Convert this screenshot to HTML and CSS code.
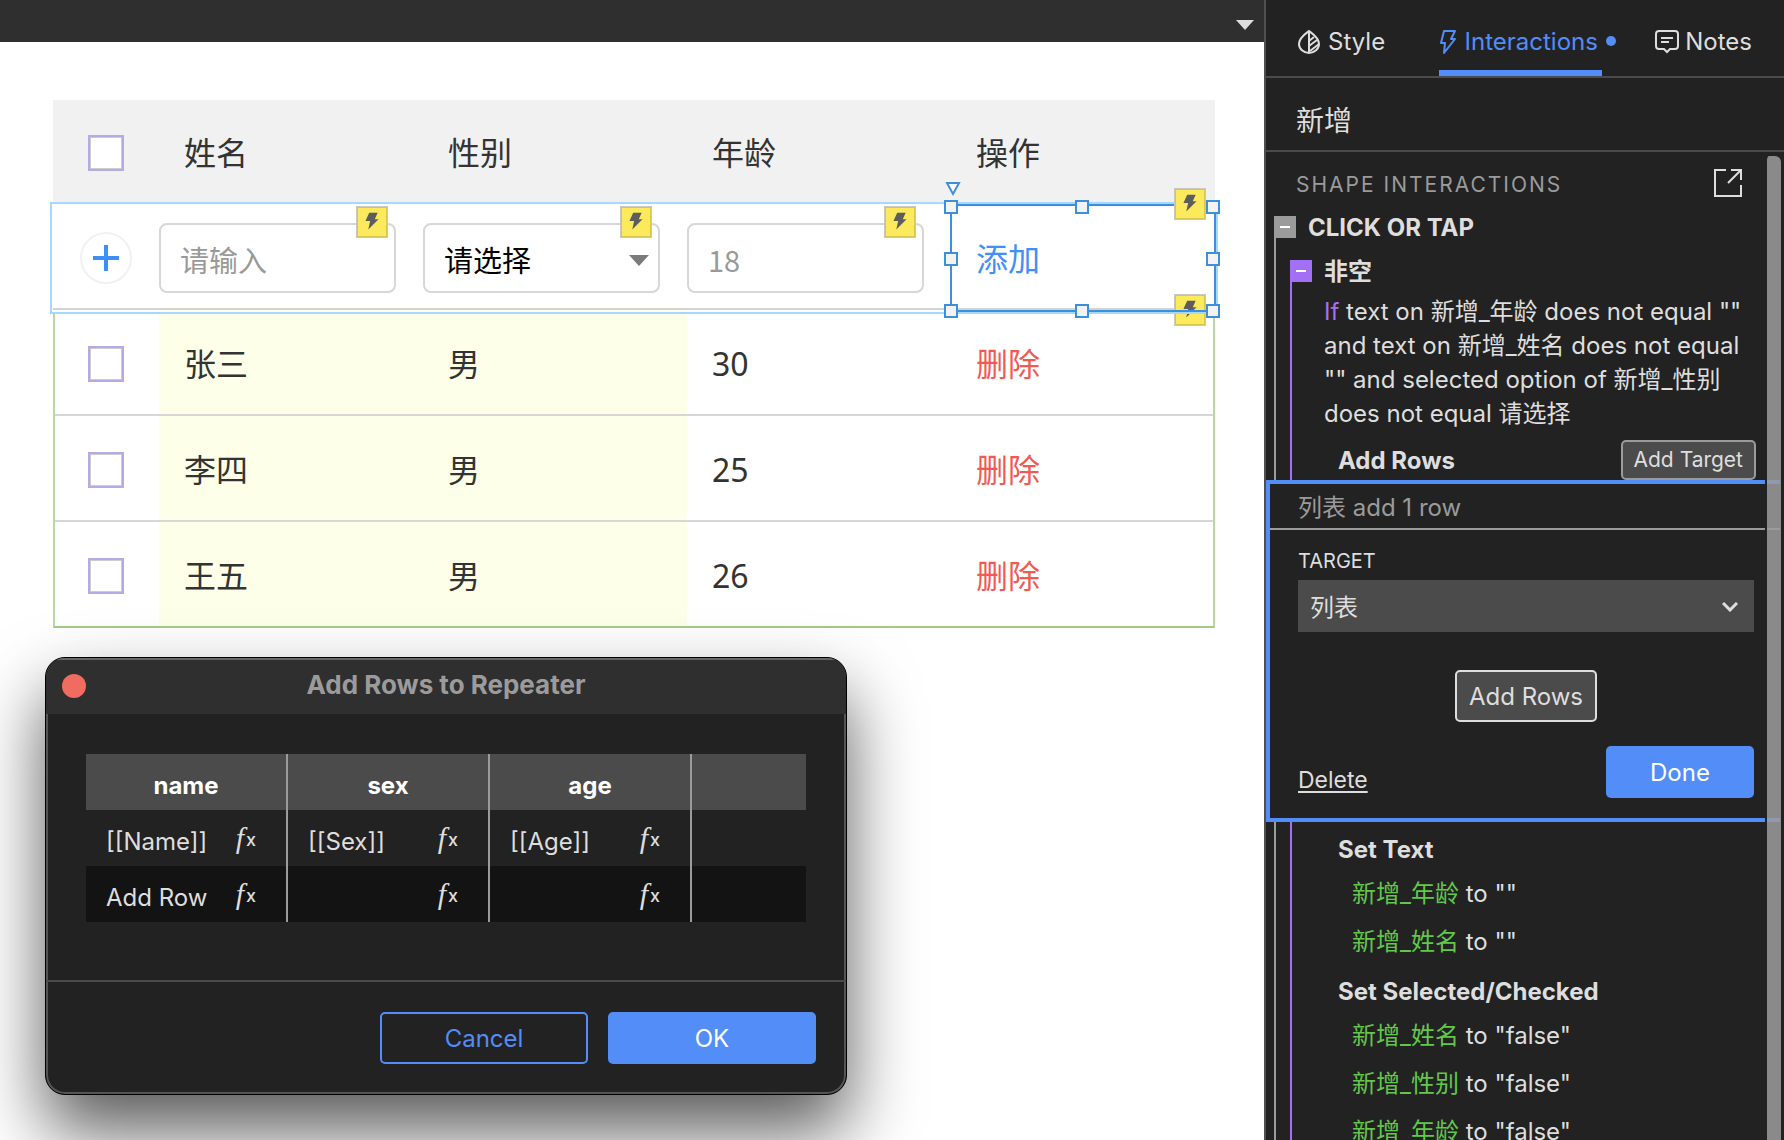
FILE: index.html
```html
<!DOCTYPE html>
<html lang="zh-CN">
<head>
<meta charset="utf-8">
<title>Add Rows to Repeater</title>
<link rel="stylesheet" href="styles.css">
</head>
<body>
<svg width="0" height="0" class="defs" aria-hidden="true">
  <symbol id="bolt" viewBox="0 0 32 32"><path d="M13 6h9l-3 7h4L12 24l2-9H9z" fill="#5d5d5d"/></symbol>
</svg>
<main class="workspace">
  <div class="ruler-bar">
    <button class="page-menu" aria-label="Page menu"><svg width="18" height="10"><path d="M0 0h18L9 10z" fill="#dedede"/></svg></button>
  </div>
  <div class="canvas">
    <div class="repeater">
      <table class="grid">
        <colgroup><col class="col-check"><col><col><col><col></colgroup>
        <thead>
          <tr><th class="center"><input type="checkbox" class="check" aria-label="全选"></th><th>姓名</th><th>性别</th><th>年龄</th><th>操作</th></tr>
        </thead>
        <tbody>
          <tr class="add-row">
            <td class="center"><button class="plus" aria-label="新增"><svg width="26" height="26"><path d="M13 0v26M0 13h26" stroke="#3f8ff9" stroke-width="4"/></svg></button></td>
            <td class="field-cell"><div class="field"><input type="text" placeholder="请输入" aria-label="姓名"><svg class="badge"><use href="#bolt"/></svg></div></td>
            <td class="field-cell"><div class="field"><select aria-label="性别"><option>请选择</option><option>男</option><option>女</option></select><svg class="caret" width="20" height="11"><path d="M0 0h20L10 11z" fill="#7a7a7a"/></svg><svg class="badge"><use href="#bolt"/></svg></div></td>
            <td class="field-cell"><div class="field"><input type="text" placeholder="18" aria-label="年龄"><svg class="badge"><use href="#bolt"/></svg></div></td>
            <td class="selected"><a href="#" class="add">添加</a>
              <svg class="badge badge-bottom"><use href="#bolt"/></svg>
              <div class="selection"></div>
              <svg class="badge badge-top"><use href="#bolt"/></svg>
              <div class="handles"><i></i><i></i><i></i><i></i><i></i><i></i><i></i><i></i></div>
              <svg class="marker" width="16" height="16"><path d="M2 2h12L8 13z" fill="#fff" stroke="#3b8fdc" stroke-width="2"/></svg>
            </td>
          </tr>
          <tr><td class="center"><input type="checkbox" class="check" aria-label="张三"></td><td class="tint">张三</td><td class="tint">男</td><td>30</td><td><a href="#" class="del">删除</a></td></tr>
          <tr><td class="center"><input type="checkbox" class="check" aria-label="李四"></td><td class="tint">李四</td><td class="tint">男</td><td>25</td><td><a href="#" class="del">删除</a></td></tr>
          <tr><td class="center"><input type="checkbox" class="check" aria-label="王五"></td><td class="tint">王五</td><td class="tint">男</td><td>26</td><td><a href="#" class="del">删除</a></td></tr>
        </tbody>
      </table>
      <div class="list-frame"></div>
      <div class="row-frame"></div>
    </div>
    <section class="dialog" role="dialog" aria-labelledby="dialog-title">
      <header class="dialog-bar">
        <button class="close" aria-label="Close"></button>
        <h2 id="dialog-title">Add Rows to Repeater</h2>
      </header>
      <div class="dialog-body">
        <table class="rows">
          <colgroup><col class="col-data"><col class="col-data"><col class="col-data"><col></colgroup>
          <thead><tr><th>name</th><th>sex</th><th>age</th><th></th></tr></thead>
          <tbody>
            <tr>
              <td><div class="cell"><span>[[Name]]</span><button class="fx"><i>f</i><b>x</b></button></div></td>
              <td><div class="cell"><span>[[Sex]]</span><button class="fx"><i>f</i><b>x</b></button></div></td>
              <td><div class="cell"><span>[[Age]]</span><button class="fx"><i>f</i><b>x</b></button></div></td>
              <td></td>
            </tr>
            <tr class="new">
              <td><div class="cell"><span>Add Row</span><button class="fx"><i>f</i><b>x</b></button></div></td>
              <td><div class="cell"><span></span><button class="fx"><i>f</i><b>x</b></button></div></td>
              <td><div class="cell"><span></span><button class="fx"><i>f</i><b>x</b></button></div></td>
              <td></td>
            </tr>
          </tbody>
        </table>
      </div>
      <footer class="dialog-foot">
        <button class="btn outline">Cancel</button>
        <button class="btn primary">OK</button>
      </footer>
    </section>
  </div>
</main>
<aside class="panel">
  <nav class="tabs">
    <a href="#" class="tab"><svg width="24" height="26" viewBox="0 0 24 26" fill="none" stroke="#dedede" stroke-width="2"><path d="M11 2C7 5 1 9 1 15a10 9 0 0 0 20 0C21 9 15 5 11 2zM11 2v22"/><path d="M11 12l5-4M11 17l8-6M12 22l9-7" stroke-width="2"/></svg>Style</a>
    <a href="#" class="tab active"><svg width="18" height="26" viewBox="0 0 18 26" fill="none" stroke="#538df7" stroke-width="2"><path d="M5 2h11l-4 8h4L5 24l1-10H2z" stroke-linejoin="round"/></svg><span>Interactions</span><span class="dot"></span></a>
    <a href="#" class="tab"><svg width="24" height="26" viewBox="0 0 24 26" fill="none" stroke="#dedede" stroke-width="2"><path d="M4 2h16a3 3 0 0 1 3 3v12a3 3 0 0 1-3 3h-5l-3 3-3-3H4a3 3 0 0 1-3-3V5a3 3 0 0 1 3-3zM6 9h12M6 13h8"/></svg>Notes</a>
  </nav>
  <h1 class="widget-name">新增</h1>
  <div class="scroller">
    <div class="section-head"><h2>SHAPE INTERACTIONS</h2><button class="popout" aria-label="Open editor"><svg width="28" height="28" fill="none" stroke="#dedede" stroke-width="2"><path d="M12 1H1v26h26V16M27 11V1H17M27 1L14 14"/></svg></button></div>
    <div class="event">
      <div class="node"><button class="toggle" aria-label="Collapse"></button><h3>CLICK OR TAP</h3></div>
      <div class="case">
        <div class="node"><button class="toggle" aria-label="Collapse"></button><h3>非空</h3></div>
        <p class="condition"><em>If</em> text on 新增_年龄 does not equal "" and text on 新增_姓名 does not equal "" and selected option of 新增_性别 does not equal 请选择</p>
        <div class="action-head"><h4>Add Rows</h4><button class="btn small">Add Target</button></div>
        <div class="editor">
          <p class="summary">列表 add 1 row</p>
          <div class="editor-body">
            <label for="target">TARGET</label>
            <div class="target-field"><select id="target"><option>列表</option></select><svg width="16" height="10" fill="none" stroke="#dedede" stroke-width="3"><path d="M1 1l7 7 7-7"/></svg></div>
            <button class="btn rows-btn">Add Rows</button>
            <div class="editor-foot"><a href="#">Delete</a><button class="btn primary">Done</button></div>
          </div>
        </div>
        <div class="actions">
          <h4>Set Text</h4>
          <p><em>新增_年龄</em> to ""</p>
          <p><em>新增_姓名</em> to ""</p>
          <h4>Set Selected/Checked</h4>
          <p><em>新增_姓名</em> to "false"</p>
          <p><em>新增_性别</em> to "false"</p>
          <p><em>新增_年龄</em> to "false"</p>
        </div>
      </div>
    </div>
    <div class="scrollbar"></div>
  </div>
</aside>
</body>
</html>
```
FILE: styles.css
```css
* { box-sizing: border-box; }
body, h1, h2, h3, h4, p { margin: 0; }
body {
  display: flex;
  height: 100vh;
  overflow: hidden;
  background: #fff;
  color: #dedede;
  font: 24px/34px Inter, "Noto Sans CJK SC", sans-serif;
}
button, input, select { font: inherit; color: inherit; margin: 0; }
button { padding: 0; border: 0; background: none; }
a { color: inherit; text-decoration: none; }
em { font-style: normal; }
svg { display: block; }
.defs { position: absolute; }

/* canvas */
.workspace { flex: 1; min-width: 0; display: flex; flex-direction: column; }
.ruler-bar { display: flex; justify-content: flex-end; align-items: flex-end; height: 42px; padding: 0 10px 12px; background: #2f2f2f; }
.canvas { position: relative; flex: 1; padding: 58px 49px 0 53px; color: #333; }
.repeater { position: relative; }
.grid { width: 100%; table-layout: fixed; border-collapse: separate; border-spacing: 0; font: 32px/40px "Noto Sans", "Noto Sans CJK SC", sans-serif; }
.col-check { width: 106px; }
.grid th, .grid td { height: 106px; padding: 4px 25px 0; text-align: left; font-weight: 400; border-bottom: 2px solid #d7d7d7; }
.grid th { height: 104px; padding-top: 2px; background: #f1f1f1; border-bottom: 0; }
.grid .center { padding-left: 0; padding-right: 0; }
.tint { background: #feffe9; }
.check { display: block; margin: 0 auto; appearance: none; width: 36px; height: 36px; background: #fff; border: 2px solid #b7a8e8; box-shadow: inset 0 0 0 1px #ccc; }
.plus { display: flex; align-items: center; justify-content: center; width: 52px; height: 52px; margin: 0 auto; border: 2px solid #f1f1f1; border-radius: 50%; }
.grid .field-cell { padding: 4px 27px 0 0; }
.grid .add-row td { border-bottom: 2px solid #d3d5d0; }
.field { position: relative; }
.field input, .field select { display: block; width: 100%; height: 70px; padding: 2px 19px 0; appearance: none; background: #fff; border: 2px solid #d7d7d7; border-radius: 8px; font: 29px/40px "Noto Sans CJK SC", sans-serif; }
.field input::placeholder { color: #999; opacity: 1; }
.field select { color: #000; }
.caret { position: absolute; right: 11px; top: 32px; }
.badge { position: absolute; right: 8px; top: -17px; width: 32px; height: 32px; background: #fce95c; border: 1px solid #c9c9c0; box-shadow: inset 0 0 0 1px #d8c74e; }
.add { color: #3f8ff9; }
.del { color: #ef5a52; }
.grid .selected { position: relative; padding-top: 6px; }
.badge-bottom { right: 9px; top: auto; bottom: -18px; z-index: 1; }
.badge-top { right: 9px; top: -16px; z-index: 4; }
.selection { position: absolute; inset: 0 -1px -4px -1px; border: 2px solid #3b8fdc; z-index: 3; }
.handles { position: absolute; inset: -4px -5px -10px -7px; display: grid; grid-template-columns: 14px 14px 14px; grid-template-rows: 14px 14px 14px; justify-content: space-between; align-content: space-between; z-index: 5; }
.handles i { background: #f3f3f3; border: 2px solid #3b8fdc; }
.handles i:nth-child(5) { grid-column: 3; }
.marker { position: absolute; left: -6px; top: -23px; z-index: 3; }
.row-frame { position: absolute; inset: 102px -3px auto; height: 112px; border: 2px solid #a4d8fc; z-index: 2; pointer-events: none; }
.list-frame { position: absolute; inset: 212px 0 0; border: 2px solid #b9d99f; border-top: 0; border-bottom-color: #a3cb86; pointer-events: none; }

/* floating dialog */
.dialog { position: absolute; left: 45px; top: 615px; z-index: 6; width: 802px; color: #dedede; background: #222; border: 1px solid #000; border-radius: 20px; overflow: hidden; box-shadow: inset 0 0 0 2px #555, 0 36px 70px rgba(0, 0, 0, .65); }
.dialog-bar { display: flex; align-items: center; height: 56px; padding: 0 16px; background: #2f2f2f; box-shadow: inset 0 2px #666; }
.close { width: 24px; height: 24px; border-radius: 50%; background: #f06b60; }
.dialog-bar h2 { flex: 1; padding-right: 24px; text-align: center; font-size: 26px; line-height: 48px; padding-bottom: 2px; color: #9b9b9b; }
.dialog-body { padding: 40px; height: 266px; }
.rows { width: 720px; table-layout: fixed; border-collapse: separate; border-spacing: 0; }
.col-data { width: 202px; }
.rows th, .rows td { height: 56px; padding: 0; border-right: 2px solid #9b9b9b; }
.rows th:last-child, .rows td:last-child { border-right: 0; }
.rows th { background: #4b4b4b; color: #fff; padding-top: 8px; }
.new td { background: #131313; }
.cell { display: flex; align-items: center; justify-content: space-between; padding: 6px 30px 0 20px; }
.cell span { padding-top: 2px; }
.fx { display: flex; align-items: center; width: 22px; height: 34px; padding-bottom: 6px; }
.fx i { flex: none; width: 12px; text-align: center; font: italic 30px/28px "Liberation Serif", serif; }
.fx b { font-size: 18px; line-height: 20px; font-weight: 500; padding-top: 4px; }
.dialog-foot { display: flex; justify-content: flex-end; gap: 20px; padding: 30px; border-top: 2px solid #4b4b4b; }
.btn { height: 52px; padding: 2px 12px 0; border: 2px solid #dedede; border-radius: 5px; background: #4b4b4b; }
.dialog-foot .btn { width: 208px; }
.btn.primary { border: 0; background: #538df7; color: #fff; }
.btn.outline { border-color: #538df7; background: none; color: #538df7; }

/* inspector */
.panel { flex: 0 0 520px; display: flex; flex-direction: column; border-left: 2px solid #4f4f4f; background: #222; }
.tabs { flex: none; display: flex; justify-content: space-between; height: 78px; padding: 0 32px; border-bottom: 2px solid #4b4b4b; }
.tab { position: relative; display: flex; align-items: center; gap: 6px; height: 76px; padding-top: 14px; border-bottom: 6px solid transparent; }
.tab.active { gap: 8px; padding-right: 4px; color: #538df7; border-bottom-color: #538df7; }
.dot { position: absolute; right: -14px; top: 36px; width: 10px; height: 10px; border-radius: 50%; background: #538df7; }
.widget-name { flex: none; height: 74px; padding: 8px 30px 0; border-bottom: 2px solid #4b4b4b; font-size: 28px; font-weight: 400; line-height: 70px; }
.scroller { position: relative; flex: 1; min-height: 0; overflow: hidden; padding: 0 4px 0 8px; }
.section-head { display: flex; align-items: center; justify-content: space-between; height: 64px; padding: 0 38px 2px 22px; }
.section-head h2 { padding-top: 4px; font-size: 21px; font-weight: 400; letter-spacing: 2px; color: #9b9b9b; }
.event { border-left: 2px solid #9b9b9b; }
.node { display: flex; align-items: center; gap: 12px; height: 22px; margin-left: -2px; }
.node h3 { padding-top: 2px; font-size: 24px; line-height: 22px; }
.toggle { position: relative; width: 22px; height: 22px; background: #9b9b9b; }
.toggle::after { content: ""; position: absolute; left: 6px; top: 10px; width: 10px; height: 2px; background: #fff; }
.case { margin: 22px 0 0 14px; border-left: 2px solid #a46ff7; }
.case .toggle { background: #a46ff7; }
.condition { padding: 13px 34px 0 32px; }
.condition em { color: #a46ff7; }
.action-head { display: flex; align-items: center; justify-content: space-between; height: 49px; padding: 9px 24px 0 46px; }
h4 { font-size: 24px; }
.action-head h4 { padding-top: 2px; }
.btn.small { height: 40px; border-color: #9b9b9b; font-size: 21px; padding: 0 11px; }
.editor { position: relative; margin-left: -26px; border: 4px solid #538df7; border-right: 0; background: #222; }
.summary { height: 46px; padding: 7px 28px 0; color: #9b9b9b; border-bottom: 2px solid #9b9b9b; }
.editor-body { display: flex; flex-direction: column; padding: 16px 26px 20px 28px; }
.editor-body label { font-size: 20px; line-height: 30px; margin-bottom: 4px; }
.target-field { position: relative; }
.target-field select { display: block; width: 100%; height: 52px; padding: 4px 12px 0; appearance: none; border: 0; border-radius: 0; background: #4b4b4b; }
.target-field svg { position: absolute; right: 16px; top: 22px; }
.rows-btn { align-self: center; margin-top: 38px; }
.editor-foot { display: flex; align-items: center; justify-content: space-between; margin-top: 24px; }
.editor-foot a { padding-top: 16px; font-size: 23px; text-decoration: underline; text-decoration-thickness: 2px; text-underline-offset: 3px; }
.editor-foot .btn { width: 148px; }
.actions { padding: 2px 0 0 46px; }
.actions h4 { height: 46px; padding-top: 5px; line-height: 41px; }
.actions p { padding-left: 14px; line-height: 48px; }
.actions em { color: #62c84a; }
.scrollbar { position: absolute; top: 4px; right: 3px; width: 16px; height: 1100px; border-left: 2px solid #222; border-radius: 4px 6px 0 0; background: rgba(156, 156, 156, .85); background-clip: padding-box; z-index: 2; }
```
